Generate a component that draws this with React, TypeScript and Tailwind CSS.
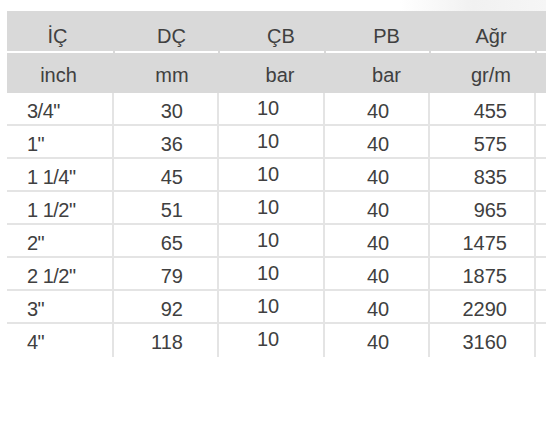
import React from "react";

const rows = [
	{ ic: '3/4"', dc: "30", cb: "10", pb: "40", agr: "455" },
	{ ic: '1"', dc: "36", cb: "10", pb: "40", agr: "575" },
	{ ic: '1 1/4"', dc: "45", cb: "10", pb: "40", agr: "835" },
	{ ic: '1 1/2"', dc: "51", cb: "10", pb: "40", agr: "965" },
	{ ic: '2"', dc: "65", cb: "10", pb: "40", agr: "1475" },
	{ ic: '2 1/2"', dc: "79", cb: "10", pb: "40", agr: "1875" },
	{ ic: '3"', dc: "92", cb: "10", pb: "40", agr: "2290" },
	{ ic: '4"', dc: "118", cb: "10", pb: "40", agr: "3160" },
];

const cols = "grid grid-cols-[107px_105px_106px_105px_106px_1fr]";

export default function App() {
	return (
		<div className="w-[546px] h-[445px] bg-white text-[#404040] text-[20px] font-['Liberation_Sans',Arial,sans-serif] overflow-hidden">
			{/* faint smudge on top of the scan */}
			<div className="h-[11px] flex">
				<div className="w-[400px]" />
				<div className="flex-1 bg-gradient-to-r from-white via-[#f1f1f1] to-[#f6f6f6]" />
			</div>
			<div className="ml-[7px]">
				{/* header row 1 */}
				<div className={`${cols} h-[42px] bg-[#d9d9d9]`}>
					<div className="flex flex-col">
						<div className="flex-1 flex items-center justify-center pt-[10px] pr-[6px]">İÇ</div>
						<div className="h-[2px] bg-white mr-[1px]" />
					</div>
					<div className="flex flex-col">
						<div className="flex-1 flex items-center justify-center pt-[10px] pl-[10px]">DÇ</div>
						<div className="h-[2px] bg-white mx-[1px]" />
					</div>
					<div className="flex flex-col">
						<div className="flex-1 flex items-center justify-center pt-[10px] pl-[18px]">ÇB</div>
						<div className="h-[2px] bg-white mx-[1px]" />
					</div>
					<div className="flex flex-col">
						<div className="flex-1 flex items-center justify-center pt-[10px] pl-[18px]">PB</div>
						<div className="h-[2px] bg-white mx-[1px]" />
					</div>
					<div className="flex flex-col">
						<div className="flex-1 flex items-center justify-center pt-[10px] pl-[16px]">Ağr</div>
						<div className="h-[2px] bg-white mx-[1px]" />
					</div>
					<div className="flex flex-col">
						<div className="flex-1" />
						<div className="h-[2px] bg-white ml-[1px]" />
					</div>
				</div>
				{/* header row 2 */}
				<div className={`${cols} h-[40px] bg-[#d9d9d9]`}>
					<div className="flex items-center justify-center pt-[4px] pr-[4px]">inch</div>
					<div className="flex items-center justify-center pt-[4px] pl-[11px]">mm</div>
					<div className="flex items-center justify-center pt-[4px] pl-[16px]">bar</div>
					<div className="flex items-center justify-center pt-[4px] pl-[18px]">bar</div>
					<div className="flex items-center justify-center pt-[4px] pl-[16px]">gr/m</div>
					<div />
				</div>
				{/* data */}
				{rows.map((r, i) => (
					<div
						key={r.ic}
						className={`${cols} h-[33px] ${i < rows.length - 1 ? "border-b-2 border-[#e4e4e4]" : ""}`}
					>
						<div className="flex items-center pl-[20px] pt-[3px] tracking-[-0.5px] border-r-2 border-[#e4e4e4]">{r.ic}</div>
						<div className="flex items-center justify-end pr-[34px] pt-[3px] border-r-2 border-[#e4e4e4]">{r.dc}</div>
						<div className="flex items-center pl-[38px] pb-[3px] border-r-2 border-[#e4e4e4]">{r.cb}</div>
						<div className="flex items-center justify-center pl-[3px] pt-[3px] border-r-2 border-[#e4e4e4]">{r.pb}</div>
						<div className="flex items-center justify-end pr-[27px] pt-[3px] border-r-2 border-[#e4e4e4]">{r.agr}</div>
						<div />
					</div>
				))}
			</div>
		</div>
	);
}
